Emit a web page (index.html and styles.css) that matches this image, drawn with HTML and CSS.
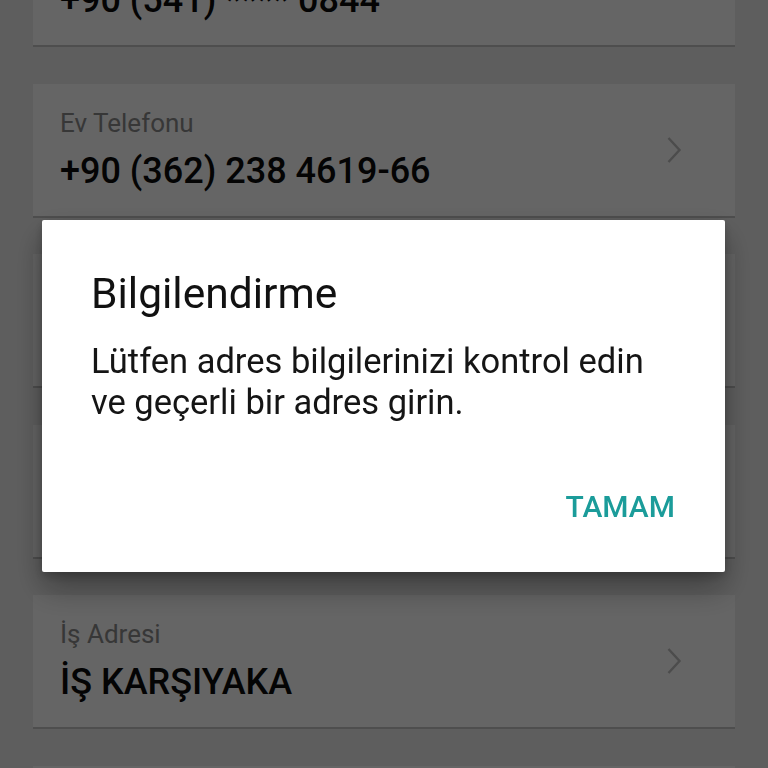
FILE: index.html
```html
<!DOCTYPE html>
<html lang="tr">
<head>
  <meta charset="UTF-8" />
  <meta name="viewport" content="width=device-width, initial-scale=1.0"/>
  <title>Bilgilerim</title>
  <link rel="stylesheet" href="styles.css">
</head>
<body>
  <main class="list">
    <div class="item">
      <div class="item-text">
        <span class="label">Cep Telefonu</span>
        <span class="value">+90 (541) **** 0844</span>
      </div>
    </div>

    <div class="item">
      <div class="item-text">
        <span class="label">Ev Telefonu</span>
        <span class="value">+90 (362) 238 4619-66</span>
      </div>
      <svg class="chevron" viewBox="0 0 16 28"><path d="M2 2 L13 14 L2 26" /></svg>
    </div>

    <!-- rows under the dialog -->
    <div class="item">
      <svg class="chevron" viewBox="0 0 16 28"><path d="M2 2 L13 14 L2 26" /></svg>
    </div>

    <div class="item">
      <svg class="chevron" viewBox="0 0 16 28"><path d="M2 2 L13 14 L2 26" /></svg>
    </div>

    <div class="item">
      <div class="item-text">
        <span class="label">İş Adresi</span>
        <span class="value">İŞ KARŞIYAKA</span>
      </div>
      <svg class="chevron" viewBox="0 0 16 28"><path d="M2 2 L13 14 L2 26" /></svg>
    </div>

    <div class="item"></div>
  </main>

  <div class="scrim">
    <div class="dialog">
      <h2>Bilgilendirme</h2>
      <p>Lütfen adres bilgilerinizi kontrol edin<br>ve geçerli bir adres girin.</p>
      <div class="actions">
        <a href="#">TAMAM</a>
      </div>
    </div>
  </div>
</body>
</html>
```

FILE: styles.css
```css
:root {
  --page-bg: #ececec;
  --card-bg: #fcfcfc;
  --line: #c2c2c2;
  --label: #8a8a8a;
  --value: #0a0a0a;
  --accent: #1b9c9a;
}

body {
  margin: 0;
  padding: 0;
  height: 768px;
  overflow: hidden;
  background: var(--page-bg);
  font-family: Roboto, "Noto Sans", sans-serif;
}

.list {
  display: flex;
  flex-direction: column;
  gap: 36.6px;
  margin-top: -87px;
  padding: 0 33px;
}

.item {
  display: flex;
  align-items: center;
  justify-content: space-between;
  min-height: 134px;
  box-sizing: border-box;
  padding: 24px 52px 24px 27px;
  background: var(--card-bg);
  border-bottom: 2px solid var(--line);
}

.item-text {
  display: flex;
  flex-direction: column;
}

.item .chevron:only-child {
  margin-left: auto;
}

.label {
  font-size: 26px;
  line-height: 30px;
  color: var(--label);
  margin-bottom: 12px;
}

.value {
  font-size: 36px;
  line-height: 42px;
  font-weight: 500;
  color: var(--value);
}

.chevron {
  width: 17px;
  height: 28px;
  fill: none;
  stroke: #bdbdbd;
  stroke-width: 2.4;
}

.scrim {
  position: fixed;
  inset: 0;
  padding-top: 24px;
  background: rgba(0, 0, 0, 0.6);
  display: flex;
  align-items: center;
  justify-content: center;
}

.dialog {
  width: 683px;
  box-sizing: border-box;
  margin-left: -1px;
  padding: 49px 50px 47px 49px;
  background: #fff;
  border-radius: 2px;
  box-shadow: 0 16px 32px rgba(0, 0, 0, 0.35), 0 4px 10px rgba(0, 0, 0, 0.2);
}

.dialog h2 {
  margin: 0 0 22px;
  font-size: 42.5px;
  line-height: 50px;
  font-weight: 400;
  color: #111;
}

.dialog p {
  margin: 0 0 66px;
  font-size: 34.5px;
  line-height: 41px;
  color: #151515;
}

.actions {
  display: flex;
  justify-content: flex-end;
}

.actions a {
  font-size: 30px;
  line-height: 36px;
  font-weight: 500;
  color: var(--accent);
  text-decoration: none;
}
```
